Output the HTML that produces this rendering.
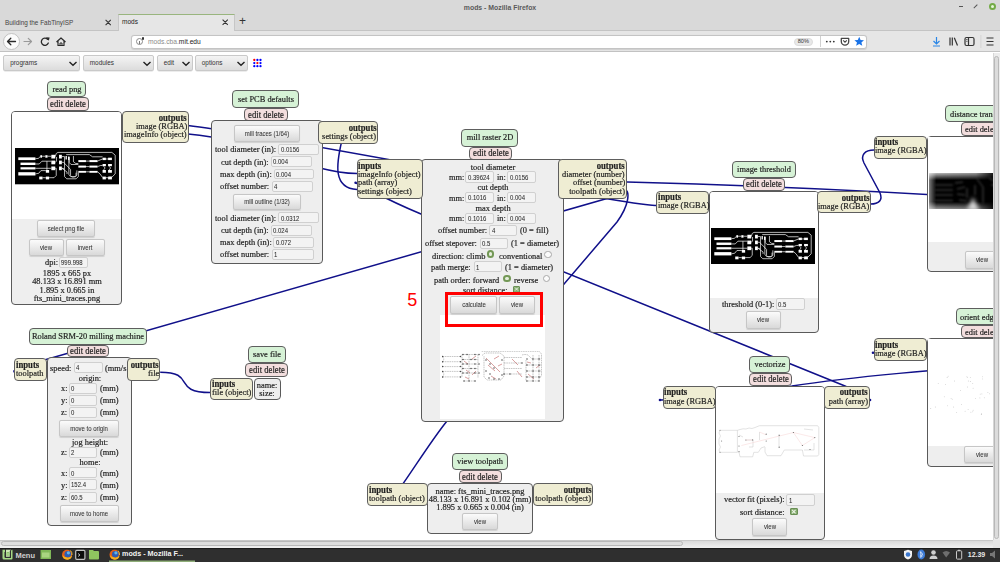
<!DOCTYPE html><html><head><meta charset="utf-8"><style>
*{margin:0;padding:0;box-sizing:border-box}
html,body{width:1000px;height:562px;overflow:hidden;background:#fff}
body{position:relative;font-family:"Liberation Serif",serif}
div{position:absolute}
.t{white-space:nowrap}
.ttl{background:#d6f2d6;border:1px solid #5e5e5e;border-radius:4px}
.ed{background:#f3dede;border:1px solid #5e5e5e;border-radius:4px}
.bd{background:#eeeeee;border:1px solid #5a5a5a;border-radius:4px}
.io{background:#efedd3;border:1px solid #5e5e5e;border-radius:4px}
.btn{background:linear-gradient(#fbfbfb,#d9d9d9);border:1px solid #c6c6c6;border-radius:2px;box-shadow:0 0.6px 0.8px rgba(0,0,0,0.12)}
.inp{background:#f3f3f3;border:1px solid #d0d0d0;border-radius:2px}
.wh{background:#fff}
svg{position:absolute;left:0;top:0}
</style></head><body>

<div class="" style="left:0.0px;top:0.0px;width:1000.0px;height:52.0px;background:#d9d9d9;"></div>
<div class="t" style="left:300.0px;width:400px;text-align:center;top:4.36px;font-size:6.90px;line-height:8.28px;font-weight:bold;color:#5a5a5a;font-family:'Liberation Sans', sans-serif;">mods - Mozilla Firefox</div>
<div style="left:959px;top:6px;width:4px;height:1.3px;background:#555"></div>
<div style="left:974.5px;top:4px;width:1.4px;height:5px;background:#555;transform:rotate(45deg)"></div>
<div style="left:988.5px;top:3px;width:7px;height:7px;border-radius:50%;background:#e8f6dd;border:2px solid #74ab47"></div>
<div class="" style="left:0.0px;top:13.0px;width:1000.0px;height:17.0px;background:#d9d9d9;"></div>
<div style="left:0;top:29.5px;width:1000px;height:1px;background:#c4c4c4"></div>
<div class="t" style="left:5.0px;top:18.76px;font-size:6.40px;line-height:7.68px;color:#444;font-family:'Liberation Sans', sans-serif;">Building the FabTinyISP</div>
<div style="left:117.5px;top:13.5px;width:117px;height:17px;background:#e6e6e6;border-left:1px solid #c6c6c6;border-right:1px solid #c6c6c6;border-top:1.5px solid #99b57e"></div>
<div class="t" style="left:122.0px;top:18.10px;font-size:6.50px;line-height:7.80px;color:#222;font-family:'Liberation Sans', sans-serif;">mods</div>
<svg width="1000" height="30" style="left:0;top:0"><path d="M105.6 19.9 L110.8 25.1 M110.8 19.9 L105.6 25.1 M222.6 19.6 L227.8 24.8 M227.8 19.6 L222.6 24.8" stroke="#333" stroke-width="1.1"/></svg>
<div class="t" style="left:239.0px;top:14.30px;font-size:12.00px;line-height:14.40px;color:#333;font-family:'Liberation Sans', sans-serif;">+</div>
<div class="" style="left:0.0px;top:30.5px;width:1000.0px;height:21.5px;background:#e6e6e6;border-bottom:1px solid #c2c2c2;"></div>
<div style="left:3px;top:33px;width:17px;height:17px;border-radius:50%;background:#fbfbfb;border:1px solid #c2c2c2"></div>
<svg width="1000" height="60" style="left:0;top:0">
<g fill="none" stroke="#2a2a2a" stroke-width="1.3" stroke-linecap="round" stroke-linejoin="round">
<path d="M7.5 41.5 H15.5 M7.5 41.5 L10.8 38.2 M7.5 41.5 L10.8 44.8"/>
</g>
<g fill="none" stroke="#9a9a9a" stroke-width="1.2" stroke-linecap="round" stroke-linejoin="round">
<path d="M24 41.5 H31.5 M31.5 41.5 L28.3 38.3 M31.5 41.5 L28.3 44.7"/>
</g>
<g fill="none" stroke="#2a2a2a" stroke-width="1.3" stroke-linecap="round">
<path d="M47.5 39.2 A3.6 3.6 0 1 0 48.3 43"/>
</g>
<path d="M46 37.2 L49.6 37.6 L48.8 40.8 Z" fill="#2a2a2a"/>
<path d="M56.5 42 L61 38 L65.5 42 M58 41 V45.5 H64 V41" fill="none" stroke="#2a2a2a" stroke-width="1.2" stroke-linejoin="round"/>
<path d="M60 45.5 V43 H62 V45.5" fill="none" stroke="#2a2a2a" stroke-width="1"/>
</svg>
<div style="left:131px;top:34.5px;width:736px;height:14.5px;background:#fff;border:1px solid #c4c4c4;border-radius:3px;box-shadow:0 0.5px 1px rgba(0,0,0,0.1)"></div>
<div style="left:135.5px;top:37.8px;width:7.6px;height:7.6px;border-radius:50%;border:0.9px solid #8a8a8a"></div>
<div style="left:138.8px;top:40.5px;width:0.9px;height:3px;background:#7a7a7a"></div>
<div style="left:141.8px;top:37.2px;width:2.4px;height:2.4px;border-radius:50%;background:#333"></div>
<div class="t" style="left:148px;top:36.5px;font-size:6.7px;line-height:10px;font-family:'Liberation Sans', sans-serif;color:#8a8a8a">mods.cba.<span style="color:#222">mit.edu</span></div>
<div style="left:793.5px;top:37.8px;width:19.5px;height:8px;border-radius:4px;background:#e9e9e9;border:0.6px solid #dcdcdc"></div>
<div class="t" style="left:603.3px;width:400px;text-align:center;top:38.44px;font-size:5.60px;line-height:6.72px;color:#333;font-family:'Liberation Sans', sans-serif;">80%</div>
<div style="left:819.5px;top:36px;width:1px;height:11px;background:#d0d0d0"></div>
<svg width="1000" height="60" style="left:0;top:0">
<g fill="#333"><circle cx="826.8" cy="41.6" r="0.9"/><circle cx="830.3" cy="41.6" r="0.9"/><circle cx="833.8" cy="41.6" r="0.9"/></g>
<path d="M841.3 38.4 H848.7 V41.5 A3.7 3.7 0 0 1 841.3 41.5 Z" fill="#fff" stroke="#454545" stroke-width="1.3" stroke-linejoin="round"/>
<path d="M843.2 40.4 L845 42.2 L846.8 40.4" fill="none" stroke="#454545" stroke-width="1.1"/>
<path d="M859.2 36.8 L860.6 40 L864 40.2 L861.4 42.4 L862.3 45.8 L859.2 43.9 L856.1 45.8 L857 42.4 L854.4 40.2 L857.8 40 Z" fill="#1a73e8"/>
<g fill="none" stroke="#2a86e6" stroke-width="1.2"><path d="M936.5 37 V44 M933.5 41 L936.5 44 L939.5 41 M933 46 H940"/></g>
<g fill="none" stroke="#333" stroke-width="1.2"><path d="M950 37.5 V45.5 M952.3 37.5 V45.5 M954.3 37.7 L957.5 45.5"/></g>
<rect x="965" y="37.5" width="9" height="8" rx="1.5" fill="none" stroke="#333" stroke-width="1.2"/>
<path d="M968.5 37.5 V45.5" stroke="#333" stroke-width="1.2"/>
<path d="M966.2 39.5 H967.5 M966.2 41.3 H967.5" stroke="#333" stroke-width="0.8"/>
<rect x="980.5" y="35" width="0.8" height="13" fill="#cfcfcf"/>
<g stroke="#333" stroke-width="1.2"><path d="M986.5 38 H993.5 M986.5 41.5 H993.5 M986.5 45 H993.5"/></g>
</svg>
<div style="left:3.4px;top:54.8px;width:77.0px;height:16px;background:linear-gradient(#f4f4f4,#dcdcdc);border:1px solid #c9c9c9;border-radius:2px;box-shadow:0 0.5px 0.5px rgba(0,0,0,0.15)"></div>
<div class="t" style="left:10.2px;top:59.16px;font-size:6.40px;line-height:7.68px;color:#333;font-family:'Liberation Sans', sans-serif;">programs</div>
<svg width="12" height="8" style="left:67.4px;top:59.5px"><path d="M2.5 2 L6 5.3 L9.5 2" fill="none" stroke="#222" stroke-width="1.4"/></svg>
<div style="left:83px;top:54.8px;width:71px;height:16px;background:linear-gradient(#f4f4f4,#dcdcdc);border:1px solid #c9c9c9;border-radius:2px;box-shadow:0 0.5px 0.5px rgba(0,0,0,0.15)"></div>
<div class="t" style="left:89.8px;top:59.16px;font-size:6.40px;line-height:7.68px;color:#333;font-family:'Liberation Sans', sans-serif;">modules</div>
<svg width="12" height="8" style="left:141px;top:59.5px"><path d="M2.5 2 L6 5.3 L9.5 2" fill="none" stroke="#222" stroke-width="1.4"/></svg>
<div style="left:157px;top:54.8px;width:35.599999999999994px;height:16px;background:linear-gradient(#f4f4f4,#dcdcdc);border:1px solid #c9c9c9;border-radius:2px;box-shadow:0 0.5px 0.5px rgba(0,0,0,0.15)"></div>
<div class="t" style="left:163.8px;top:59.16px;font-size:6.40px;line-height:7.68px;color:#333;font-family:'Liberation Sans', sans-serif;">edit</div>
<svg width="12" height="8" style="left:179.6px;top:59.5px"><path d="M2.5 2 L6 5.3 L9.5 2" fill="none" stroke="#222" stroke-width="1.4"/></svg>
<div style="left:195px;top:54.8px;width:53px;height:16px;background:linear-gradient(#f4f4f4,#dcdcdc);border:1px solid #c9c9c9;border-radius:2px;box-shadow:0 0.5px 0.5px rgba(0,0,0,0.15)"></div>
<div class="t" style="left:201.8px;top:59.16px;font-size:6.40px;line-height:7.68px;color:#333;font-family:'Liberation Sans', sans-serif;">options</div>
<svg width="12" height="8" style="left:235px;top:59.5px"><path d="M2.5 2 L6 5.3 L9.5 2" fill="none" stroke="#222" stroke-width="1.4"/></svg>
<svg width="1000" height="80" style="left:0;top:0"><circle cx="254.3" cy="60.0" r="1.15" fill="#f00"/><circle cx="257.4" cy="60.0" r="1.15" fill="#00f"/><circle cx="260.5" cy="60.0" r="1.15" fill="#00f"/><circle cx="254.3" cy="63.1" r="1.15" fill="#00f"/><circle cx="257.4" cy="63.1" r="1.15" fill="#f00"/><circle cx="260.5" cy="63.1" r="1.15" fill="#00f"/><circle cx="254.3" cy="66.2" r="1.15" fill="#00f"/><circle cx="257.4" cy="66.2" r="1.15" fill="#00f"/><circle cx="260.5" cy="66.2" r="1.15" fill="#00f"/></svg>
<svg width="1000" height="562" style="left:0;top:0"><path d="M188 125.4 C 283 137, 642 209, 657 205.3" fill="none" stroke="#10108a" stroke-width="1.5"/><path d="M188 134 C 255 139.5, 305 172, 357 173.6" fill="none" stroke="#10108a" stroke-width="1.5"/><path d="M342 140 C 336 165, 333 188, 357 189.5" fill="none" stroke="#10108a" stroke-width="1.5"/><path d="M356 183 C 372 190, 380 197, 421 214 L 845 386 C 855 390, 862 396, 870 400" fill="none" stroke="#10108a" stroke-width="1.5"/><path d="M627 182 C 700 184, 850 189, 1000 199" fill="none" stroke="#10108a" stroke-width="1.5"/><path d="M626 190 C 629 192, 630 204, 617 222 L 447 421 C 430 442, 410 475, 395 495" fill="none" stroke="#10108a" stroke-width="1.5"/><path d="M870.5 204 C 879 204, 883 200, 880 193 L 864 163 C 860 155, 865 150, 874 150" fill="none" stroke="#10108a" stroke-width="1.5"/><path d="M160.2 372.2 C 197 372.2, 171 392.5, 210.3 392.5" fill="none" stroke="#10108a" stroke-width="1.5"/><path d="M1000 366 C 950 368, 850 377, 792 386 L 715 396 C 690 399, 675 400, 660 400" fill="none" stroke="#10108a" stroke-width="1.5"/><path d="M627 192.7 L 20 367 Q 15 369 14 371" fill="none" stroke="#10108a" stroke-width="1.5"/><circle cx="355.6" cy="182.8" r="1.3" fill="#10108a"/><circle cx="14.5" cy="371.5" r="1.3" fill="#10108a"/><circle cx="660" cy="400" r="1.3" fill="#10108a"/><circle cx="870" cy="400" r="1.3" fill="#10108a"/><circle cx="873" cy="352.7" r="1.3" fill="#10108a"/></svg>
<div class="ttl" style="left:47.0px;top:81.0px;width:39.4px;height:16.0px;"></div>
<div class="t" style="left:-133.3px;width:400px;text-align:center;top:83.58px;font-size:9.20px;line-height:11.04px;color:#222;font-family:'Liberation Serif', serif;transform:scaleX(0.9132);transform-origin:center center;-webkit-text-stroke:0.2px #222;">read png</div>
<div class="ed" style="left:46.5px;top:97.0px;width:42.1px;height:14.0px;"></div>
<div class="t" style="left:-132.4px;width:400px;text-align:center;top:99.02px;font-size:9.47px;line-height:11.37px;color:#222;font-family:'Liberation Serif', serif;transform:scaleX(0.9132);transform-origin:center center;-webkit-text-stroke:0.2px #222;">edit delete</div>
<div class="bd" style="left:11.0px;top:111.0px;width:111.0px;height:194.3px;"></div>
<div class="wh" style="left:12px;top:112px;width:109px;height:107px;border-radius:3px 3px 0 0"></div>
<svg width="104.6" height="36.3" viewBox="0 0 104.5 36.3" preserveAspectRatio="none" style="left:14.6px;top:148.3px"><rect width="104.5" height="36.3" fill="#000"/><g><g fill="#fff"><rect x="3.3" y="9.35" width="17.1" height="2.75"/><rect x="5.5" y="14.6" width="14.9" height="2.4"/><rect x="5.5" y="19.25" width="14.9" height="2.2"/><rect x="3.3" y="24.2" width="17.1" height="3.3"/><rect x="25.3" y="7.2" width="1.7" height="2.5"/><rect x="30.3" y="7.2" width="2.2" height="2.5"/><rect x="36.3" y="6.8" width="3.9" height="3.7"/><rect x="44" y="6.8" width="2.8" height="3.7"/><rect x="36.3" y="12.6" width="3.9" height="3.7"/><rect x="44" y="12.6" width="2.8" height="3.7"/><rect x="36.3" y="18.5" width="3.9" height="3.7"/><rect x="44" y="18.5" width="2.8" height="3.7"/><rect x="30.8" y="22" width="3.3" height="2.75"/><rect x="24.2" y="28.6" width="3.3" height="2.8"/><rect x="30.8" y="28.6" width="3.3" height="2.8"/><rect x="63.3" y="12.1" width="7.6" height="2"/><rect x="63.3" y="17.6" width="7.6" height="2"/><rect x="63.3" y="22.9" width="7.6" height="1.85"/><rect x="74.3" y="12.1" width="8.2" height="2"/><rect x="74.3" y="17.6" width="8.2" height="2"/><rect x="74.3" y="22.9" width="8.2" height="1.85"/><rect x="87.5" y="9.7" width="3.3" height="2.4"/><rect x="93" y="9.7" width="3.8" height="2.4"/><rect x="87.5" y="16" width="3.3" height="2.2"/><rect x="93" y="16" width="3.8" height="2.2"/><rect x="87.5" y="22" width="3.3" height="2.75"/><rect x="93" y="22" width="3.8" height="2.75"/><rect x="87.5" y="28.6" width="3.3" height="2.8"/><rect x="93" y="28.6" width="3.8" height="2.8"/><rect x="50.5" y="8" width="1.3" height="3.5"/><rect x="53" y="9" width="1.3" height="3"/></g><g fill="none" stroke="#fff" stroke-width="0.7"><path d="M40.2 8.6 L41.2 5.5 L42.9 4.4 H96.8 L100.1 7.15 V25.9 L96.8 29.2 H94"/><path d="M20.4 10.7 L23.5 10.4 L25.3 8.3 M27 8.25 H30.3 M32.5 8.25 H36.3"/><path d="M20.4 16 H24.2 L26.9 13.2 H36.3"/><path d="M20.4 20.3 H36.3"/><path d="M20.4 25.9 L23.7 25.3 L25.9 22.6 H30.8"/><path d="M31.9 13.2 V22"/><path d="M40.2 14.5 L41.5 13 V9"/><path d="M27.5 29.7 H30.8 M34.1 29.7 H39 L41.2 27.5 V20.3 H40.2"/><path d="M46.8 8.6 H49.5 V28.6 L51.7 30.8 H61.1 L63.3 28.6 V24.5"/><path d="M46.8 14.3 H48.5 L55.5 21.5 V27.5 L57 29 H59.5 L61 27.5 V24.7"/><path d="M51.2 6.6 H74.3 L77.5 8.8 H87.5"/><path d="M54.2 9 V14.5 L56 16.5 H63.3"/><path d="M70.9 18.6 H74.3 M70.9 13.1 H74.3 M70.9 23.8 H74.3"/><path d="M82.5 13.1 L85 12 L87.5 11 M82.5 18.6 L85.5 17.5 H87.5 M82.5 23.8 L85 26 L87.5 29.5"/><path d="M47 20.4 L52 24 V26"/><path d="M53.8 8 V26.4 L55.5 28.7 H60.7 L61.8 26.4 V22.4"/><path d="M58.4 8 V13.8 L60.7 15.5 H63.3"/><path d="M46.8 20.3 L49 20.5"/><path d="M88.5 18.2 L90 20 L88.5 22 M94 18.2 L95.5 20 L94 22 M90.8 11 H93 M90.8 29.7 H93"/></g></g></svg>
<div class="io" style="left:121.6px;top:111.0px;width:67.0px;height:31.6px;"></div>
<div class="t" style="right:813.0px;top:112.52px;font-size:9.53px;line-height:11.43px;font-weight:bold;color:#222;font-family:'Liberation Serif', serif;transform:scaleX(0.9132);transform-origin:right center;-webkit-text-stroke:0.2px #222;">outputs</div>
<div class="t" style="right:813.0px;top:120.72px;font-size:9.20px;line-height:11.04px;color:#222;font-family:'Liberation Serif', serif;transform:scaleX(0.9132);transform-origin:right center;-webkit-text-stroke:0.2px #222;">image (RGBA)</div>
<div class="t" style="right:813.0px;top:128.92px;font-size:9.20px;line-height:11.04px;color:#222;font-family:'Liberation Serif', serif;transform:scaleX(0.9132);transform-origin:right center;-webkit-text-stroke:0.2px #222;">imageInfo (object)</div>
<div class="btn" style="left:37.0px;top:219.7px;width:58.0px;height:17.3px;"></div>
<div class="t" style="left:-134.0px;width:400px;text-align:center;top:224.59px;font-size:6.60px;line-height:7.92px;color:#333;font-family:'Liberation Sans', sans-serif;transform:scaleX(0.9091);transform-origin:center center;-webkit-text-stroke:0.05px #333;">select png file</div>
<div class="btn" style="left:28.6px;top:239.0px;width:35.4px;height:17.0px;"></div>
<div class="t" style="left:-153.7px;width:400px;text-align:center;top:243.74px;font-size:6.60px;line-height:7.92px;color:#333;font-family:'Liberation Sans', sans-serif;transform:scaleX(0.9091);transform-origin:center center;-webkit-text-stroke:0.05px #333;">view</div>
<div class="btn" style="left:66.0px;top:239.0px;width:38.7px;height:17.0px;"></div>
<div class="t" style="left:-114.7px;width:400px;text-align:center;top:243.74px;font-size:6.60px;line-height:7.92px;color:#333;font-family:'Liberation Sans', sans-serif;transform:scaleX(0.9091);transform-origin:center center;-webkit-text-stroke:0.05px #333;">invert</div>
<div class="t" style="left:45.0px;top:257.48px;font-size:9.20px;line-height:11.04px;color:#222;font-family:'Liberation Serif', serif;transform:scaleX(0.9132);transform-origin:left center;-webkit-text-stroke:0.2px #222;">dpi:</div>
<div class="inp" style="left:59.0px;top:257.0px;width:28.6px;height:11.0px;"></div>
<div class="t" style="left:61.2px;top:259.34px;font-size:6.60px;line-height:7.92px;color:#2a2a2a;font-family:'Liberation Sans', sans-serif;transform:scaleX(0.9091);transform-origin:left center;-webkit-text-stroke:0.05px #2a2a2a;">999.998</div>
<div class="t" style="left:-133.5px;width:400px;text-align:center;top:268.18px;font-size:9.20px;line-height:11.04px;color:#222;font-family:'Liberation Serif', serif;transform:scaleX(0.9132);transform-origin:center center;-webkit-text-stroke:0.2px #222;">1895 x 665 px</div>
<div class="t" style="left:-133.5px;width:400px;text-align:center;top:276.48px;font-size:9.20px;line-height:11.04px;color:#222;font-family:'Liberation Serif', serif;transform:scaleX(0.9132);transform-origin:center center;-webkit-text-stroke:0.2px #222;">48.133 x 16.891 mm</div>
<div class="t" style="left:-133.5px;width:400px;text-align:center;top:284.78px;font-size:9.20px;line-height:11.04px;color:#222;font-family:'Liberation Serif', serif;transform:scaleX(0.9132);transform-origin:center center;-webkit-text-stroke:0.2px #222;">1.895 x 0.665 in</div>
<div class="t" style="left:-133.5px;width:400px;text-align:center;top:292.98px;font-size:9.20px;line-height:11.04px;color:#222;font-family:'Liberation Serif', serif;transform:scaleX(0.9132);transform-origin:center center;-webkit-text-stroke:0.2px #222;">fts_mini_traces.png</div>
<div class="ttl" style="left:232.4px;top:90.3px;width:66.6px;height:18.2px;"></div>
<div class="t" style="left:65.7px;width:400px;text-align:center;top:93.98px;font-size:9.20px;line-height:11.04px;color:#222;font-family:'Liberation Serif', serif;transform:scaleX(0.9132);transform-origin:center center;-webkit-text-stroke:0.2px #222;">set PCB defaults</div>
<div class="ed" style="left:244.0px;top:108.0px;width:43.5px;height:13.0px;"></div>
<div class="t" style="left:65.8px;width:400px;text-align:center;top:109.52px;font-size:9.47px;line-height:11.37px;color:#222;font-family:'Liberation Serif', serif;transform:scaleX(0.9132);transform-origin:center center;-webkit-text-stroke:0.2px #222;">edit delete</div>
<div class="bd" style="left:211.2px;top:120.2px;width:111.8px;height:143.8px;"></div>
<div class="btn" style="left:233.8px;top:125.4px;width:66.0px;height:17.1px;"></div>
<div class="t" style="left:66.8px;width:400px;text-align:center;top:130.19px;font-size:6.60px;line-height:7.92px;color:#333;font-family:'Liberation Sans', sans-serif;transform:scaleX(0.9091);transform-origin:center center;-webkit-text-stroke:0.05px #333;">mill traces (1/64)</div>
<div class="t" style="left:215.0px;top:144.38px;font-size:9.20px;line-height:11.04px;color:#222;font-family:'Liberation Serif', serif;transform:scaleX(0.9132);transform-origin:left center;-webkit-text-stroke:0.2px #222;">tool diameter (in):</div>
<div class="inp" style="left:278.3px;top:144.1px;width:40.7px;height:10.6px;"></div>
<div class="t" style="left:280.5px;top:146.24px;font-size:6.60px;line-height:7.92px;color:#2a2a2a;font-family:'Liberation Sans', sans-serif;transform:scaleX(0.9091);transform-origin:left center;-webkit-text-stroke:0.05px #2a2a2a;">0.0156</div>
<div class="t" style="left:221.0px;top:156.58px;font-size:9.20px;line-height:11.04px;color:#222;font-family:'Liberation Serif', serif;transform:scaleX(0.9132);transform-origin:left center;-webkit-text-stroke:0.2px #222;">cut depth (in):</div>
<div class="inp" style="left:271.0px;top:156.3px;width:41.3px;height:10.6px;"></div>
<div class="t" style="left:273.2px;top:158.44px;font-size:6.60px;line-height:7.92px;color:#2a2a2a;font-family:'Liberation Sans', sans-serif;transform:scaleX(0.9091);transform-origin:left center;-webkit-text-stroke:0.05px #2a2a2a;">0.004</div>
<div class="t" style="left:219.7px;top:169.18px;font-size:9.20px;line-height:11.04px;color:#222;font-family:'Liberation Serif', serif;transform:scaleX(0.9132);transform-origin:left center;-webkit-text-stroke:0.2px #222;">max depth (in):</div>
<div class="inp" style="left:273.5px;top:168.9px;width:40.0px;height:10.6px;"></div>
<div class="t" style="left:275.7px;top:171.04px;font-size:6.60px;line-height:7.92px;color:#2a2a2a;font-family:'Liberation Sans', sans-serif;transform:scaleX(0.9091);transform-origin:left center;-webkit-text-stroke:0.05px #2a2a2a;">0.004</div>
<div class="t" style="left:220.2px;top:181.38px;font-size:9.20px;line-height:11.04px;color:#222;font-family:'Liberation Serif', serif;transform:scaleX(0.9132);transform-origin:left center;-webkit-text-stroke:0.2px #222;">offset number:</div>
<div class="inp" style="left:272.2px;top:181.1px;width:41.3px;height:10.6px;"></div>
<div class="t" style="left:274.4px;top:183.24px;font-size:6.60px;line-height:7.92px;color:#2a2a2a;font-family:'Liberation Sans', sans-serif;transform:scaleX(0.9091);transform-origin:left center;-webkit-text-stroke:0.05px #2a2a2a;">4</div>
<div class="btn" style="left:232.8px;top:193.6px;width:68.1px;height:16.8px;"></div>
<div class="t" style="left:66.9px;width:400px;text-align:center;top:198.24px;font-size:6.60px;line-height:7.92px;color:#333;font-family:'Liberation Sans', sans-serif;transform:scaleX(0.9091);transform-origin:center center;-webkit-text-stroke:0.05px #333;">mill outline (1/32)</div>
<div class="t" style="left:214.7px;top:212.78px;font-size:9.20px;line-height:11.04px;color:#222;font-family:'Liberation Serif', serif;transform:scaleX(0.9132);transform-origin:left center;-webkit-text-stroke:0.2px #222;">tool diameter (in):</div>
<div class="inp" style="left:278.4px;top:212.3px;width:40.9px;height:11.0px;"></div>
<div class="t" style="left:280.6px;top:214.64px;font-size:6.60px;line-height:7.92px;color:#2a2a2a;font-family:'Liberation Sans', sans-serif;transform:scaleX(0.9091);transform-origin:left center;-webkit-text-stroke:0.05px #2a2a2a;">0.0312</div>
<div class="t" style="left:221.0px;top:225.28px;font-size:9.20px;line-height:11.04px;color:#222;font-family:'Liberation Serif', serif;transform:scaleX(0.9132);transform-origin:left center;-webkit-text-stroke:0.2px #222;">cut depth (in):</div>
<div class="inp" style="left:271.2px;top:224.8px;width:41.2px;height:11.0px;"></div>
<div class="t" style="left:273.4px;top:227.14px;font-size:6.60px;line-height:7.92px;color:#2a2a2a;font-family:'Liberation Sans', sans-serif;transform:scaleX(0.9091);transform-origin:left center;-webkit-text-stroke:0.05px #2a2a2a;">0.024</div>
<div class="t" style="left:219.7px;top:237.38px;font-size:9.20px;line-height:11.04px;color:#222;font-family:'Liberation Serif', serif;transform:scaleX(0.9132);transform-origin:left center;-webkit-text-stroke:0.2px #222;">max depth (in):</div>
<div class="inp" style="left:273.3px;top:236.9px;width:40.7px;height:11.0px;"></div>
<div class="t" style="left:275.5px;top:239.24px;font-size:6.60px;line-height:7.92px;color:#2a2a2a;font-family:'Liberation Sans', sans-serif;transform:scaleX(0.9091);transform-origin:left center;-webkit-text-stroke:0.05px #2a2a2a;">0.072</div>
<div class="t" style="left:220.2px;top:249.38px;font-size:9.20px;line-height:11.04px;color:#222;font-family:'Liberation Serif', serif;transform:scaleX(0.9132);transform-origin:left center;-webkit-text-stroke:0.2px #222;">offset number:</div>
<div class="inp" style="left:272.0px;top:248.9px;width:41.7px;height:11.0px;"></div>
<div class="t" style="left:274.2px;top:251.24px;font-size:6.60px;line-height:7.92px;color:#2a2a2a;font-family:'Liberation Sans', sans-serif;transform:scaleX(0.9091);transform-origin:left center;-webkit-text-stroke:0.05px #2a2a2a;">1</div>
<div class="io" style="left:317.7px;top:121.0px;width:60.3px;height:22.8px;"></div>
<div class="t" style="right:623.6px;top:122.52px;font-size:9.53px;line-height:11.43px;font-weight:bold;color:#222;font-family:'Liberation Serif', serif;transform:scaleX(0.9132);transform-origin:right center;-webkit-text-stroke:0.2px #222;">outputs</div>
<div class="t" style="right:623.6px;top:130.72px;font-size:9.20px;line-height:11.04px;color:#222;font-family:'Liberation Serif', serif;transform:scaleX(0.9132);transform-origin:right center;-webkit-text-stroke:0.2px #222;">settings (object)</div>
<div class="ttl" style="left:461.2px;top:129.0px;width:57.0px;height:17.5px;"></div>
<div class="t" style="left:289.7px;width:400px;text-align:center;top:132.33px;font-size:9.20px;line-height:11.04px;color:#222;font-family:'Liberation Serif', serif;transform:scaleX(0.9132);transform-origin:center center;-webkit-text-stroke:0.2px #222;">mill raster 2D</div>
<div class="ed" style="left:469.2px;top:146.5px;width:43.0px;height:13.3px;"></div>
<div class="t" style="left:290.7px;width:400px;text-align:center;top:148.17px;font-size:9.47px;line-height:11.37px;color:#222;font-family:'Liberation Serif', serif;transform:scaleX(0.9132);transform-origin:center center;-webkit-text-stroke:0.2px #222;">edit delete</div>
<div class="bd" style="left:421.0px;top:159.4px;width:143.0px;height:262.8px;"></div>
<div class="io" style="left:356.6px;top:159.4px;width:66.2px;height:39.6px;"></div>
<div class="t" style="left:358.4px;top:160.92px;font-size:9.53px;line-height:11.43px;font-weight:bold;color:#222;font-family:'Liberation Serif', serif;transform:scaleX(0.9132);transform-origin:left center;-webkit-text-stroke:0.2px #222;">inputs</div>
<div class="t" style="left:358.4px;top:169.12px;font-size:9.20px;line-height:11.04px;color:#222;font-family:'Liberation Serif', serif;transform:scaleX(0.9132);transform-origin:left center;-webkit-text-stroke:0.2px #222;">imageInfo (object)</div>
<div class="t" style="left:358.4px;top:177.32px;font-size:9.20px;line-height:11.04px;color:#222;font-family:'Liberation Serif', serif;transform:scaleX(0.9132);transform-origin:left center;-webkit-text-stroke:0.2px #222;">path (array)</div>
<div class="t" style="left:358.4px;top:185.52px;font-size:9.20px;line-height:11.04px;color:#222;font-family:'Liberation Serif', serif;transform:scaleX(0.9132);transform-origin:left center;-webkit-text-stroke:0.2px #222;">settings (object)</div>
<div class="io" style="left:558.0px;top:159.4px;width:68.7px;height:39.4px;"></div>
<div class="t" style="right:374.9px;top:160.92px;font-size:9.53px;line-height:11.43px;font-weight:bold;color:#222;font-family:'Liberation Serif', serif;transform:scaleX(0.9132);transform-origin:right center;-webkit-text-stroke:0.2px #222;">outputs</div>
<div class="t" style="right:374.9px;top:169.12px;font-size:9.20px;line-height:11.04px;color:#222;font-family:'Liberation Serif', serif;transform:scaleX(0.9132);transform-origin:right center;-webkit-text-stroke:0.2px #222;">diameter (number)</div>
<div class="t" style="right:374.9px;top:177.32px;font-size:9.20px;line-height:11.04px;color:#222;font-family:'Liberation Serif', serif;transform:scaleX(0.9132);transform-origin:right center;-webkit-text-stroke:0.2px #222;">offset (number)</div>
<div class="t" style="right:374.9px;top:185.52px;font-size:9.20px;line-height:11.04px;color:#222;font-family:'Liberation Serif', serif;transform:scaleX(0.9132);transform-origin:right center;-webkit-text-stroke:0.2px #222;">toolpath (object)</div>
<div class="t" style="left:292.7px;width:400px;text-align:center;top:161.78px;font-size:9.20px;line-height:11.04px;color:#222;font-family:'Liberation Serif', serif;transform:scaleX(0.9132);transform-origin:center center;-webkit-text-stroke:0.2px #222;">tool diameter</div>
<div class="t" style="left:449.0px;top:171.98px;font-size:9.20px;line-height:11.04px;color:#222;font-family:'Liberation Serif', serif;transform:scaleX(0.9132);transform-origin:left center;-webkit-text-stroke:0.2px #222;">mm:</div>
<div class="inp" style="left:465.4px;top:171.2px;width:29.0px;height:11.6px;"></div>
<div class="t" style="left:467.6px;top:173.84px;font-size:6.60px;line-height:7.92px;color:#2a2a2a;font-family:'Liberation Sans', sans-serif;transform:scaleX(0.9091);transform-origin:left center;-webkit-text-stroke:0.05px #2a2a2a;">0.39624</div>
<div class="t" style="left:497.0px;top:171.98px;font-size:9.20px;line-height:11.04px;color:#222;font-family:'Liberation Serif', serif;transform:scaleX(0.9132);transform-origin:left center;-webkit-text-stroke:0.2px #222;">in:</div>
<div class="inp" style="left:507.4px;top:171.2px;width:28.3px;height:11.6px;"></div>
<div class="t" style="left:509.6px;top:173.84px;font-size:6.60px;line-height:7.92px;color:#2a2a2a;font-family:'Liberation Sans', sans-serif;transform:scaleX(0.9091);transform-origin:left center;-webkit-text-stroke:0.05px #2a2a2a;">0.0156</div>
<div class="t" style="left:449.0px;top:192.58px;font-size:9.20px;line-height:11.04px;color:#222;font-family:'Liberation Serif', serif;transform:scaleX(0.9132);transform-origin:left center;-webkit-text-stroke:0.2px #222;">mm:</div>
<div class="inp" style="left:465.4px;top:191.8px;width:29.0px;height:11.6px;"></div>
<div class="t" style="left:467.6px;top:194.44px;font-size:6.60px;line-height:7.92px;color:#2a2a2a;font-family:'Liberation Sans', sans-serif;transform:scaleX(0.9091);transform-origin:left center;-webkit-text-stroke:0.05px #2a2a2a;">0.1016</div>
<div class="t" style="left:497.0px;top:192.58px;font-size:9.20px;line-height:11.04px;color:#222;font-family:'Liberation Serif', serif;transform:scaleX(0.9132);transform-origin:left center;-webkit-text-stroke:0.2px #222;">in:</div>
<div class="inp" style="left:507.4px;top:191.8px;width:28.3px;height:11.6px;"></div>
<div class="t" style="left:509.6px;top:194.44px;font-size:6.60px;line-height:7.92px;color:#2a2a2a;font-family:'Liberation Sans', sans-serif;transform:scaleX(0.9091);transform-origin:left center;-webkit-text-stroke:0.05px #2a2a2a;">0.004</div>
<div class="t" style="left:449.0px;top:213.28px;font-size:9.20px;line-height:11.04px;color:#222;font-family:'Liberation Serif', serif;transform:scaleX(0.9132);transform-origin:left center;-webkit-text-stroke:0.2px #222;">mm:</div>
<div class="inp" style="left:465.4px;top:212.5px;width:29.0px;height:11.6px;"></div>
<div class="t" style="left:467.6px;top:215.14px;font-size:6.60px;line-height:7.92px;color:#2a2a2a;font-family:'Liberation Sans', sans-serif;transform:scaleX(0.9091);transform-origin:left center;-webkit-text-stroke:0.05px #2a2a2a;">0.1016</div>
<div class="t" style="left:497.0px;top:213.28px;font-size:9.20px;line-height:11.04px;color:#222;font-family:'Liberation Serif', serif;transform:scaleX(0.9132);transform-origin:left center;-webkit-text-stroke:0.2px #222;">in:</div>
<div class="inp" style="left:507.4px;top:212.5px;width:28.3px;height:11.6px;"></div>
<div class="t" style="left:509.6px;top:215.14px;font-size:6.60px;line-height:7.92px;color:#2a2a2a;font-family:'Liberation Sans', sans-serif;transform:scaleX(0.9091);transform-origin:left center;-webkit-text-stroke:0.05px #2a2a2a;">0.004</div>
<div class="t" style="left:292.7px;width:400px;text-align:center;top:182.48px;font-size:9.20px;line-height:11.04px;color:#222;font-family:'Liberation Serif', serif;transform:scaleX(0.9132);transform-origin:center center;-webkit-text-stroke:0.2px #222;">cut depth</div>
<div class="t" style="left:292.7px;width:400px;text-align:center;top:202.98px;font-size:9.20px;line-height:11.04px;color:#222;font-family:'Liberation Serif', serif;transform:scaleX(0.9132);transform-origin:center center;-webkit-text-stroke:0.2px #222;">max depth</div>
<div class="t" style="left:437.8px;top:225.18px;font-size:9.20px;line-height:11.04px;color:#222;font-family:'Liberation Serif', serif;transform:scaleX(0.9132);transform-origin:left center;-webkit-text-stroke:0.2px #222;">offset number:</div>
<div class="inp" style="left:489.3px;top:224.9px;width:27.7px;height:11.0px;"></div>
<div class="t" style="left:491.5px;top:227.24px;font-size:6.60px;line-height:7.92px;color:#2a2a2a;font-family:'Liberation Sans', sans-serif;transform:scaleX(0.9091);transform-origin:left center;-webkit-text-stroke:0.05px #2a2a2a;">4</div>
<div class="t" style="left:519.8px;top:225.18px;font-size:9.20px;line-height:11.04px;color:#222;font-family:'Liberation Serif', serif;transform:scaleX(0.9132);transform-origin:left center;-webkit-text-stroke:0.2px #222;">(0 = fill)</div>
<div class="t" style="left:424.7px;top:238.28px;font-size:9.20px;line-height:11.04px;color:#222;font-family:'Liberation Serif', serif;transform:scaleX(0.9132);transform-origin:left center;-webkit-text-stroke:0.2px #222;">offset stepover:</div>
<div class="inp" style="left:479.8px;top:237.7px;width:28.0px;height:11.2px;"></div>
<div class="t" style="left:482.0px;top:240.14px;font-size:6.60px;line-height:7.92px;color:#2a2a2a;font-family:'Liberation Sans', sans-serif;transform:scaleX(0.9091);transform-origin:left center;-webkit-text-stroke:0.05px #2a2a2a;">0.5</div>
<div class="t" style="left:510.6px;top:238.28px;font-size:9.20px;line-height:11.04px;color:#222;font-family:'Liberation Serif', serif;transform:scaleX(0.9132);transform-origin:left center;-webkit-text-stroke:0.2px #222;">(1 = diameter)</div>
<div class="t" style="left:431.6px;top:250.78px;font-size:9.20px;line-height:11.04px;color:#222;font-family:'Liberation Serif', serif;transform:scaleX(0.9132);transform-origin:left center;-webkit-text-stroke:0.2px #222;">direction: climb</div>
<div class="t" style="left:498.5px;top:250.78px;font-size:9.20px;line-height:11.04px;color:#222;font-family:'Liberation Serif', serif;transform:scaleX(0.9132);transform-origin:left center;-webkit-text-stroke:0.2px #222;">conventional</div>
<div class="t" style="left:430.8px;top:261.58px;font-size:9.20px;line-height:11.04px;color:#222;font-family:'Liberation Serif', serif;transform:scaleX(0.9132);transform-origin:left center;-webkit-text-stroke:0.2px #222;">path merge:</div>
<div class="inp" style="left:474.2px;top:261.4px;width:28.0px;height:10.6px;"></div>
<div class="t" style="left:476.4px;top:263.54px;font-size:6.60px;line-height:7.92px;color:#2a2a2a;font-family:'Liberation Sans', sans-serif;transform:scaleX(0.9091);transform-origin:left center;-webkit-text-stroke:0.05px #2a2a2a;">1</div>
<div class="t" style="left:505.0px;top:261.58px;font-size:9.20px;line-height:11.04px;color:#222;font-family:'Liberation Serif', serif;transform:scaleX(0.9132);transform-origin:left center;-webkit-text-stroke:0.2px #222;">(1 = diameter)</div>
<div class="t" style="left:433.5px;top:275.18px;font-size:9.20px;line-height:11.04px;color:#222;font-family:'Liberation Serif', serif;transform:scaleX(0.9132);transform-origin:left center;-webkit-text-stroke:0.2px #222;">path order: forward</div>
<div class="t" style="left:513.8px;top:275.18px;font-size:9.20px;line-height:11.04px;color:#222;font-family:'Liberation Serif', serif;transform:scaleX(0.9132);transform-origin:left center;-webkit-text-stroke:0.2px #222;">reverse</div>
<div class="t" style="left:462.6px;top:285.48px;font-size:9.20px;line-height:11.04px;color:#222;font-family:'Liberation Serif', serif;transform:scaleX(0.9132);transform-origin:left center;-webkit-text-stroke:0.2px #222;">sort distance:</div>
<div style="left:486.8px;top:250.4px;width:7.6px;height:7.6px;border-radius:50%;background:#e6eedd;border:2.1px solid #739856"></div>
<div style="left:544.4px;top:250.6px;width:7.2px;height:7.2px;border-radius:50%;background:#fbfbfb;border:0.8px solid #a8a8a8"></div>
<div style="left:503.1px;top:274.5px;width:7.6px;height:7.6px;border-radius:50%;background:#e6eedd;border:2.1px solid #739856"></div>
<div style="left:543.1px;top:274.7px;width:7.2px;height:7.2px;border-radius:50%;background:#fbfbfb;border:0.8px solid #a8a8a8"></div>
<div style="left:513.4px;top:286.4px;width:7.1px;height:6.2px;background:#86ad70;border:0.8px solid #6a8f56;border-radius:1px"></div>
<svg width="7.1" height="6.2" style="left:513.4px;top:286.4px" viewBox="0 0 10 10"><path d="M2.6 2.6 L7.4 7.4 M7.4 2.6 L2.6 7.4" stroke="#eef4e8" stroke-width="1.5"/></svg>
<div class="wh" style="left:440.3px;top:314.7px;width:104.7px;height:104px"></div>
<div class="btn" style="left:450.3px;top:296.0px;width:46.3px;height:17.7px;"></div>
<div class="t" style="left:273.5px;width:400px;text-align:center;top:301.09px;font-size:6.60px;line-height:7.92px;color:#333;font-family:'Liberation Sans', sans-serif;transform:scaleX(0.9091);transform-origin:center center;-webkit-text-stroke:0.05px #333;">calculate</div>
<div class="btn" style="left:499.4px;top:296.0px;width:35.5px;height:17.7px;"></div>
<div class="t" style="left:317.1px;width:400px;text-align:center;top:301.09px;font-size:6.60px;line-height:7.92px;color:#333;font-family:'Liberation Sans', sans-serif;transform:scaleX(0.9091);transform-origin:center center;-webkit-text-stroke:0.05px #333;">view</div>
<svg width="100.4" height="31" viewBox="0 0 100.4 31" style="left:442.4px;top:350.6px"><g fill="none" stroke="#8c8c8c" stroke-width="0.5" stroke-dasharray="1.6 0.7"><path d="M39.7 0.3 H97.2 L99.5 3 V25 L97 27"/><path d="M0.6 5.5 H18.5 M0.6 10.7 H18.5 M0.6 15.6 H18.5 M0.6 20.4 H18.5 M0.6 25.9 H18.5"/><path d="M0.6 5.5 L2 8 L0.6 10.7 M0.6 20.4 L2 23 L0.6 25.9"/><path d="M20 3.5 H36 M20 8.5 H36 M20 13 H36 M20 17.5 H36 M20 22 H36 M22 30 H34 M20 3.5 V26 M36 3.5 V27 M27 3 V30"/><path d="M40 4.5 L43 2 H58 L62 5 V25 L59 29 H45 L42 26 V5"/><path d="M62 6.5 H80 M62 12 H80 M62 17.5 H80 M62 23 H80"/><path d="M80 4 Q83 3 86 4 L90 8 H99 M84 14 H99 M84 20 H99 M84 26 H99 M91 4 V30 M97 4 V30 M84 9 V30 L90 30 H97"/></g><g fill="none" stroke="#b85050" stroke-width="0.55"><path d="M22 10 L26 13 M30 8 L34 5 M24 19 L28 22 M30 24 L34 20 M23 26 L27 28"/><path d="M44 7 L58 21 M46 14 L53 20 M52 8 L57 5 M49 25 L54 28 M56 15 L60 13"/><path d="M70 8 L76 14 M75 20 L80 26 M85 11 L89 12 M86 23 L92 28 M94 17 L98 14"/></g><g fill="#4a4a4a"><circle cx="0.6" cy="5.5" r="0.75"/><circle cx="18.5" cy="5.5" r="0.75"/><circle cx="0.6" cy="10.7" r="0.75"/><circle cx="18.5" cy="10.7" r="0.75"/><circle cx="0.6" cy="15.6" r="0.75"/><circle cx="18.5" cy="15.6" r="0.75"/><circle cx="0.6" cy="20.4" r="0.75"/><circle cx="18.5" cy="20.4" r="0.75"/><circle cx="0.6" cy="25.9" r="0.75"/><circle cx="18.5" cy="25.9" r="0.75"/><circle cx="21" cy="3.5" r="0.75"/><circle cx="21" cy="8.5" r="0.75"/><circle cx="21" cy="13" r="0.75"/><circle cx="21" cy="17.5" r="0.75"/><circle cx="21" cy="22" r="0.75"/><circle cx="25" cy="3.5" r="0.75"/><circle cx="25" cy="13" r="0.75"/><circle cx="25" cy="22" r="0.75"/><circle cx="29" cy="8.5" r="0.75"/><circle cx="29" cy="17.5" r="0.75"/><circle cx="33" cy="3.5" r="0.75"/><circle cx="33" cy="8.5" r="0.75"/><circle cx="33" cy="13" r="0.75"/><circle cx="33" cy="17.5" r="0.75"/><circle cx="33" cy="22" r="0.75"/><circle cx="37" cy="3.5" r="0.75"/><circle cx="37" cy="13" r="0.75"/><circle cx="37" cy="22" r="0.75"/><circle cx="22" cy="30" r="0.75"/><circle cx="27" cy="30" r="0.75"/><circle cx="33" cy="30" r="0.75"/><circle cx="44" cy="9" r="0.75"/><circle cx="48" cy="13" r="0.75"/><circle cx="52" cy="17" r="0.75"/><circle cx="47" cy="27" r="0.75"/><circle cx="52" cy="28" r="0.75"/><circle cx="57" cy="28" r="0.75"/><circle cx="60" cy="24" r="0.75"/><circle cx="60" cy="9" r="0.75"/><circle cx="44" cy="20" r="0.75"/><circle cx="48" cy="23" r="0.75"/><circle cx="85" cy="8" r="0.75"/><circle cx="85" cy="14" r="0.75"/><circle cx="85" cy="20" r="0.75"/><circle cx="85" cy="26" r="0.75"/><circle cx="85" cy="30" r="0.75"/><circle cx="91" cy="8" r="0.75"/><circle cx="91" cy="14" r="0.75"/><circle cx="91" cy="20" r="0.75"/><circle cx="91" cy="26" r="0.75"/><circle cx="91" cy="30" r="0.75"/><circle cx="97" cy="8" r="0.75"/><circle cx="97" cy="14" r="0.75"/><circle cx="97" cy="20" r="0.75"/><circle cx="97" cy="26" r="0.75"/><circle cx="97" cy="30" r="0.75"/><circle cx="62" cy="23" r="0.75"/><circle cx="80" cy="12" r="0.75"/><circle cx="68" cy="23" r="0.75"/></g></svg>
<div style="left:445.2px;top:291.6px;width:98px;height:35.5px;border:3px solid #f00"></div>
<div class="t" style="left:212.2px;width:400px;text-align:center;top:289.50px;font-size:18.00px;line-height:20.00px;color:#f00;font-family:'Liberation Sans', sans-serif;">5</div>
<div class="ttl" style="left:731.6px;top:160.6px;width:64.2px;height:17.4px;"></div>
<div class="t" style="left:563.7px;width:400px;text-align:center;top:163.88px;font-size:9.20px;line-height:11.04px;color:#222;font-family:'Liberation Serif', serif;transform:scaleX(0.9132);transform-origin:center center;-webkit-text-stroke:0.2px #222;">image threshold</div>
<div class="ed" style="left:742.8px;top:178.0px;width:42.2px;height:12.5px;"></div>
<div class="t" style="left:563.9px;width:400px;text-align:center;top:179.27px;font-size:9.47px;line-height:11.37px;color:#222;font-family:'Liberation Serif', serif;transform:scaleX(0.9132);transform-origin:center center;-webkit-text-stroke:0.2px #222;">edit delete</div>
<div class="bd" style="left:708.5px;top:190.5px;width:110.1px;height:142.3px;"></div>
<div class="wh" style="left:709.5px;top:191.5px;width:108.1px;height:106.2px;border-radius:3px 3px 0 0"></div>
<svg width="104.6" height="36.2" viewBox="0 0 104.5 36.3" preserveAspectRatio="none" style="left:710.9px;top:228.0px"><rect width="104.5" height="36.3" fill="#000"/><g><g fill="#fff"><rect x="3.3" y="9.35" width="17.1" height="2.75"/><rect x="5.5" y="14.6" width="14.9" height="2.4"/><rect x="5.5" y="19.25" width="14.9" height="2.2"/><rect x="3.3" y="24.2" width="17.1" height="3.3"/><rect x="25.3" y="7.2" width="1.7" height="2.5"/><rect x="30.3" y="7.2" width="2.2" height="2.5"/><rect x="36.3" y="6.8" width="3.9" height="3.7"/><rect x="44" y="6.8" width="2.8" height="3.7"/><rect x="36.3" y="12.6" width="3.9" height="3.7"/><rect x="44" y="12.6" width="2.8" height="3.7"/><rect x="36.3" y="18.5" width="3.9" height="3.7"/><rect x="44" y="18.5" width="2.8" height="3.7"/><rect x="30.8" y="22" width="3.3" height="2.75"/><rect x="24.2" y="28.6" width="3.3" height="2.8"/><rect x="30.8" y="28.6" width="3.3" height="2.8"/><rect x="63.3" y="12.1" width="7.6" height="2"/><rect x="63.3" y="17.6" width="7.6" height="2"/><rect x="63.3" y="22.9" width="7.6" height="1.85"/><rect x="74.3" y="12.1" width="8.2" height="2"/><rect x="74.3" y="17.6" width="8.2" height="2"/><rect x="74.3" y="22.9" width="8.2" height="1.85"/><rect x="87.5" y="9.7" width="3.3" height="2.4"/><rect x="93" y="9.7" width="3.8" height="2.4"/><rect x="87.5" y="16" width="3.3" height="2.2"/><rect x="93" y="16" width="3.8" height="2.2"/><rect x="87.5" y="22" width="3.3" height="2.75"/><rect x="93" y="22" width="3.8" height="2.75"/><rect x="87.5" y="28.6" width="3.3" height="2.8"/><rect x="93" y="28.6" width="3.8" height="2.8"/><rect x="50.5" y="8" width="1.3" height="3.5"/><rect x="53" y="9" width="1.3" height="3"/></g><g fill="none" stroke="#fff" stroke-width="0.7"><path d="M40.2 8.6 L41.2 5.5 L42.9 4.4 H96.8 L100.1 7.15 V25.9 L96.8 29.2 H94"/><path d="M20.4 10.7 L23.5 10.4 L25.3 8.3 M27 8.25 H30.3 M32.5 8.25 H36.3"/><path d="M20.4 16 H24.2 L26.9 13.2 H36.3"/><path d="M20.4 20.3 H36.3"/><path d="M20.4 25.9 L23.7 25.3 L25.9 22.6 H30.8"/><path d="M31.9 13.2 V22"/><path d="M40.2 14.5 L41.5 13 V9"/><path d="M27.5 29.7 H30.8 M34.1 29.7 H39 L41.2 27.5 V20.3 H40.2"/><path d="M46.8 8.6 H49.5 V28.6 L51.7 30.8 H61.1 L63.3 28.6 V24.5"/><path d="M46.8 14.3 H48.5 L55.5 21.5 V27.5 L57 29 H59.5 L61 27.5 V24.7"/><path d="M51.2 6.6 H74.3 L77.5 8.8 H87.5"/><path d="M54.2 9 V14.5 L56 16.5 H63.3"/><path d="M70.9 18.6 H74.3 M70.9 13.1 H74.3 M70.9 23.8 H74.3"/><path d="M82.5 13.1 L85 12 L87.5 11 M82.5 18.6 L85.5 17.5 H87.5 M82.5 23.8 L85 26 L87.5 29.5"/><path d="M47 20.4 L52 24 V26"/><path d="M53.8 8 V26.4 L55.5 28.7 H60.7 L61.8 26.4 V22.4"/><path d="M58.4 8 V13.8 L60.7 15.5 H63.3"/><path d="M46.8 20.3 L49 20.5"/><path d="M88.5 18.2 L90 20 L88.5 22 M94 18.2 L95.5 20 L94 22 M90.8 11 H93 M90.8 29.7 H93"/></g></g></svg>
<div class="io" style="left:656.0px;top:190.5px;width:53.2px;height:23.1px;"></div>
<div class="t" style="left:657.8px;top:192.02px;font-size:9.53px;line-height:11.43px;font-weight:bold;color:#222;font-family:'Liberation Serif', serif;transform:scaleX(0.9132);transform-origin:left center;-webkit-text-stroke:0.2px #222;">inputs</div>
<div class="t" style="left:657.8px;top:200.22px;font-size:9.20px;line-height:11.04px;color:#222;font-family:'Liberation Serif', serif;transform:scaleX(0.9132);transform-origin:left center;-webkit-text-stroke:0.2px #222;">image (RGBA)</div>
<div class="io" style="left:817.4px;top:191.4px;width:53.5px;height:21.9px;"></div>
<div class="t" style="right:130.7px;top:192.92px;font-size:9.53px;line-height:11.43px;font-weight:bold;color:#222;font-family:'Liberation Serif', serif;transform:scaleX(0.9132);transform-origin:right center;-webkit-text-stroke:0.2px #222;">outputs</div>
<div class="t" style="right:130.7px;top:201.12px;font-size:9.20px;line-height:11.04px;color:#222;font-family:'Liberation Serif', serif;transform:scaleX(0.9132);transform-origin:right center;-webkit-text-stroke:0.2px #222;">image (RGBA)</div>
<div class="t" style="left:721.7px;top:298.68px;font-size:9.20px;line-height:11.04px;color:#222;font-family:'Liberation Serif', serif;transform:scaleX(0.9132);transform-origin:left center;-webkit-text-stroke:0.2px #222;">threshold (0-1):</div>
<div class="inp" style="left:775.7px;top:298.0px;width:29.0px;height:11.7px;"></div>
<div class="t" style="left:777.9px;top:300.69px;font-size:6.60px;line-height:7.92px;color:#2a2a2a;font-family:'Liberation Sans', sans-serif;transform:scaleX(0.9091);transform-origin:left center;-webkit-text-stroke:0.05px #2a2a2a;">0.5</div>
<div class="btn" style="left:746.0px;top:311.3px;width:34.6px;height:17.4px;"></div>
<div class="t" style="left:563.3px;width:400px;text-align:center;top:316.24px;font-size:6.60px;line-height:7.92px;color:#333;font-family:'Liberation Sans', sans-serif;transform:scaleX(0.9091);transform-origin:center center;-webkit-text-stroke:0.05px #333;">view</div>
<div style="left:0;top:0;width:992.6px;height:540px;overflow:hidden">
<div class="ttl" style="left:945.2px;top:105.0px;width:84.8px;height:17.0px;"></div>
<div class="t" style="left:949.6px;top:108.78px;font-size:9.20px;line-height:11.04px;color:#222;font-family:'Liberation Serif', serif;transform:scaleX(0.9132);transform-origin:left center;-webkit-text-stroke:0.2px #222;">distance transform</div>
<div class="ed" style="left:961.0px;top:122.0px;width:69.0px;height:13.6px;"></div>
<div class="t" style="left:964.5px;top:124.08px;font-size:9.20px;line-height:11.04px;color:#222;font-family:'Liberation Serif', serif;transform:scaleX(0.9132);transform-origin:left center;-webkit-text-stroke:0.2px #222;">edit delete</div>
<div class="bd" style="left:926.6px;top:135.6px;width:83.4px;height:136.9px;"></div>
<div class="wh" style="left:927.6px;top:136.6px;width:80px;height:105.5px;"></div>
<svg width="104" height="36" viewBox="0 0 104 36" style="left:929.3px;top:172.7px">
<defs>
<linearGradient id="dt2" x1="0" y1="1" x2="0" y2="0"><stop offset="0" stop-color="#fff" stop-opacity="0.6"/><stop offset="0.2" stop-color="#fff" stop-opacity="0"/></linearGradient>
<linearGradient id="dt3" x1="0" y1="0" x2="1" y2="0"><stop offset="0" stop-color="#fff" stop-opacity="0.5"/><stop offset="0.07" stop-color="#fff" stop-opacity="0"/></linearGradient>
<linearGradient id="dt4" x1="0" y1="0" x2="1" y2="0"><stop offset="0" stop-color="#fff" stop-opacity="1"/><stop offset="0.45" stop-color="#fff" stop-opacity="0.8"/><stop offset="0.65" stop-color="#fff" stop-opacity="0"/></linearGradient>
<linearGradient id="dt1" x1="0" y1="0" x2="0" y2="1"><stop offset="0" stop-color="#fff" stop-opacity="0.75"/><stop offset="0.2" stop-color="#fff" stop-opacity="0"/></linearGradient>
<mask id="dtm"><rect width="104" height="36" fill="url(#dt4)"/></mask>
<filter id="dtb" x="-20%" y="-20%" width="140%" height="140%"><feGaussianBlur stdDeviation="1.1"/></filter>
<filter id="dtb2" x="-50%" y="-50%" width="200%" height="200%"><feGaussianBlur stdDeviation="2.2"/></filter>
</defs>
<rect width="104" height="36" fill="#000"/>
<rect width="104" height="36" fill="url(#dt1)" mask="url(#dtm)"/>
<rect width="104" height="36" fill="url(#dt2)" mask="url(#dtm)"/>
<rect width="104" height="36" fill="url(#dt3)"/>
<path d="M38 37 L44 24 L50 37 Z" fill="#fff" fill-opacity="0.8" filter="url(#dtb2)"/>
<g filter="url(#dtb)" fill="none" stroke="#6a6a6a" stroke-width="0.7">
<path d="M6 12 H24 M6 17 H24 M6 22 H24 M6 27.5 H24"/>
<path d="M26 10 L34 9 M28 16 L36 14 M28 21 L36 22 M30 27 L38 28 M38 15 V25 M46 12 V22"/>
<path d="M48 6 L54 14 V30 M60 5 L66 9 V20 L72 26 M62 12 H74 L80 18 V32 M84 10 V32 M92 8 V32 M75 24 H86 M88 12 H98 M88 20 H98"/>
</g>
</svg>
<div class="btn" style="left:964.5px;top:251.2px;width:35.5px;height:17.8px;"></div>
<div class="t" style="left:782.2px;width:400px;text-align:center;top:256.34px;font-size:6.60px;line-height:7.92px;color:#333;font-family:'Liberation Sans', sans-serif;transform:scaleX(0.9091);transform-origin:center center;-webkit-text-stroke:0.05px #333;">view</div>
<div class="ttl" style="left:955.5px;top:307.8px;width:74.5px;height:17.6px;"></div>
<div class="t" style="left:960.0px;top:311.78px;font-size:9.20px;line-height:11.04px;color:#222;font-family:'Liberation Serif', serif;transform:scaleX(0.9132);transform-origin:left center;-webkit-text-stroke:0.2px #222;">orient edges</div>
<div class="ed" style="left:961.0px;top:325.4px;width:69.0px;height:12.9px;"></div>
<div class="t" style="left:964.5px;top:327.08px;font-size:9.20px;line-height:11.04px;color:#222;font-family:'Liberation Serif', serif;transform:scaleX(0.9132);transform-origin:left center;-webkit-text-stroke:0.2px #222;">edit delete</div>
<div class="bd" style="left:926.6px;top:338.3px;width:83.4px;height:129.1px;"></div>
<div class="wh" style="left:927.6px;top:339.3px;width:80px;height:106.3px;"></div>
<div class="btn" style="left:964.0px;top:446.2px;width:36.0px;height:17.0px;"></div>
<div class="t" style="left:782.0px;width:400px;text-align:center;top:450.94px;font-size:6.60px;line-height:7.92px;color:#333;font-family:'Liberation Sans', sans-serif;transform:scaleX(0.9091);transform-origin:center center;-webkit-text-stroke:0.05px #333;">view</div>
</div>
<div class="io" style="left:873.5px;top:135.6px;width:53.8px;height:23.0px;"></div>
<div class="t" style="left:875.3px;top:137.12px;font-size:9.53px;line-height:11.43px;font-weight:bold;color:#222;font-family:'Liberation Serif', serif;transform:scaleX(0.9132);transform-origin:left center;-webkit-text-stroke:0.2px #222;">inputs</div>
<div class="t" style="left:875.3px;top:145.32px;font-size:9.20px;line-height:11.04px;color:#222;font-family:'Liberation Serif', serif;transform:scaleX(0.9132);transform-origin:left center;-webkit-text-stroke:0.2px #222;">image (RGBA)</div>
<div class="io" style="left:873.5px;top:338.3px;width:53.8px;height:22.4px;"></div>
<div class="t" style="left:875.3px;top:339.82px;font-size:9.53px;line-height:11.43px;font-weight:bold;color:#222;font-family:'Liberation Serif', serif;transform:scaleX(0.9132);transform-origin:left center;-webkit-text-stroke:0.2px #222;">inputs</div>
<div class="t" style="left:875.3px;top:348.02px;font-size:9.20px;line-height:11.04px;color:#222;font-family:'Liberation Serif', serif;transform:scaleX(0.9132);transform-origin:left center;-webkit-text-stroke:0.2px #222;">image (RGBA)</div>
<svg width="1000" height="562" style="left:0;top:0"><circle cx="944.3" cy="396.8" r="0.4" fill="#aaa"/><circle cx="952.2" cy="399.2" r="0.4" fill="#aaa"/><circle cx="967.5" cy="377.6" r="0.4" fill="#aaa"/><circle cx="930.8" cy="408.5" r="0.4" fill="#aaa"/><circle cx="945.6" cy="384.4" r="0.4" fill="#aaa"/><circle cx="989.7" cy="393.8" r="0.4" fill="#aaa"/><circle cx="980.2" cy="394.1" r="0.4" fill="#aaa"/><circle cx="968.3" cy="381.0" r="0.4" fill="#aaa"/><circle cx="968.1" cy="409.7" r="0.4" fill="#aaa"/><circle cx="961.4" cy="404.7" r="0.4" fill="#aaa"/><circle cx="970.3" cy="377.6" r="0.4" fill="#aaa"/><circle cx="975.5" cy="398.6" r="0.4" fill="#aaa"/><circle cx="948.1" cy="376.2" r="0.4" fill="#aaa"/><circle cx="981.9" cy="393.9" r="0.4" fill="#aaa"/><circle cx="973.1" cy="410.2" r="0.4" fill="#aaa"/><circle cx="972.8" cy="411.8" r="0.4" fill="#aaa"/><circle cx="953.7" cy="407.0" r="0.4" fill="#aaa"/><circle cx="956.7" cy="412.4" r="0.4" fill="#aaa"/><circle cx="982.7" cy="378.9" r="0.4" fill="#aaa"/><circle cx="938.2" cy="383.7" r="0.4" fill="#aaa"/><circle cx="987.9" cy="392.4" r="0.4" fill="#aaa"/><circle cx="967.6" cy="387.0" r="0.4" fill="#aaa"/><circle cx="960.4" cy="390.4" r="0.4" fill="#aaa"/><circle cx="951.1" cy="398.4" r="0.4" fill="#aaa"/><circle cx="965.1" cy="411.2" r="0.4" fill="#aaa"/><circle cx="970.9" cy="412.2" r="0.4" fill="#aaa"/><circle cx="981.4" cy="414.6" r="0.4" fill="#aaa"/><circle cx="970.3" cy="381.5" r="0.4" fill="#aaa"/><circle cx="981.6" cy="413.6" r="0.4" fill="#aaa"/><circle cx="984.3" cy="397.8" r="0.4" fill="#aaa"/><circle cx="972.8" cy="383.4" r="0.4" fill="#aaa"/><circle cx="979.9" cy="397.9" r="0.4" fill="#aaa"/><circle cx="947.1" cy="377.5" r="0.4" fill="#aaa"/><circle cx="981.2" cy="414.6" r="0.4" fill="#aaa"/><circle cx="935.3" cy="407.0" r="0.4" fill="#aaa"/><circle cx="954.6" cy="381.0" r="0.4" fill="#aaa"/><circle cx="947.6" cy="405.8" r="0.4" fill="#aaa"/><circle cx="982.4" cy="376.8" r="0.4" fill="#aaa"/><circle cx="966.9" cy="376.8" r="0.4" fill="#aaa"/><circle cx="973.1" cy="388.2" r="0.4" fill="#aaa"/></svg>
<div class="ttl" style="left:749.4px;top:356.3px;width:41.0px;height:16.3px;"></div>
<div class="t" style="left:569.9px;width:400px;text-align:center;top:359.03px;font-size:9.20px;line-height:11.04px;color:#222;font-family:'Liberation Serif', serif;transform:scaleX(0.9132);transform-origin:center center;-webkit-text-stroke:0.2px #222;">vectorize</div>
<div class="ed" style="left:748.8px;top:372.6px;width:43.4px;height:13.2px;"></div>
<div class="t" style="left:570.5px;width:400px;text-align:center;top:374.22px;font-size:9.47px;line-height:11.37px;color:#222;font-family:'Liberation Serif', serif;transform:scaleX(0.9132);transform-origin:center center;-webkit-text-stroke:0.2px #222;">edit delete</div>
<div class="bd" style="left:714.7px;top:385.8px;width:110.4px;height:154.2px;"></div>
<div class="wh" style="left:715.7px;top:386.8px;width:108.4px;height:106.2px;border-radius:3px 3px 0 0"></div>
<svg width="113" height="50" viewBox="0 0 113 50" style="left:712px;top:415px">
<g fill="none" stroke="#c6c6c6" stroke-width="0.5">
<path d="M8 15.3 H25.4 V37.3 H8 L7 35 L8.5 32 L7 29 V24 L8.5 21 L7 18 Z"/>
<path d="M25.4 15.3 L28 14.5 L31 13.8 L34 14 L37 13 L40 13.5 L43 12.5 L47.5 10.7 H105.6 L106.8 12.4 V39.5 L105.6 41 H91.5 L90.4 35 H72.3 L69 40.7 H55 L53 37 V32"/>
<path d="M27 37.3 L28 41.8 H40.7 L41.8 37.3 H46.3 L49 33 L53 31.6"/>
<path d="M27 20 L31 22 M34 25 H41 V32 H37 M47.5 17 V25 M67 19 V33 M92 14 L101 15 M92 35 H102 V28"/>
</g>
<g fill="none" stroke="#f6d2d2" stroke-width="0.5">
<path d="M29.4 30.5 L81.4 17.5 L102.8 22.6 M47.5 17 L54 19.8 M81.4 17.5 L90.4 30.5 L102.8 22.6 M33 25 L41 25"/>
</g>
<g fill="#6a6a6a">
<circle cx="27" cy="21.5" r="0.6"/><circle cx="27" cy="31" r="0.6"/><circle cx="27" cy="36.7" r="0.6"/>
<circle cx="54.2" cy="19.2" r="0.6"/><circle cx="54.2" cy="26" r="0.6"/><circle cx="67.2" cy="20.3" r="0.6"/><circle cx="67.2" cy="32.2" r="0.6"/>
<circle cx="40.7" cy="24.9" r="0.55"/><circle cx="33.9" cy="24.9" r="0.5"/><circle cx="90.4" cy="30.5" r="0.6"/><circle cx="98" cy="34.5" r="0.6"/>
<circle cx="102.8" cy="22.6" r="0.6"/><circle cx="81.4" cy="17.5" r="0.6"/><circle cx="9.6" cy="26" r="0.5"/><circle cx="8" cy="15.3" r="0.5"/><circle cx="8" cy="37.3" r="0.5"/>
</g>
</svg>
<div class="io" style="left:662.6px;top:385.8px;width:53.2px;height:23.2px;"></div>
<div class="t" style="left:664.4px;top:387.32px;font-size:9.53px;line-height:11.43px;font-weight:bold;color:#222;font-family:'Liberation Serif', serif;transform:scaleX(0.9132);transform-origin:left center;-webkit-text-stroke:0.2px #222;">inputs</div>
<div class="t" style="left:664.4px;top:395.52px;font-size:9.20px;line-height:11.04px;color:#222;font-family:'Liberation Serif', serif;transform:scaleX(0.9132);transform-origin:left center;-webkit-text-stroke:0.2px #222;">image (RGBA)</div>
<div class="io" style="left:824.4px;top:385.8px;width:45.2px;height:23.2px;"></div>
<div class="t" style="right:132.0px;top:387.32px;font-size:9.53px;line-height:11.43px;font-weight:bold;color:#222;font-family:'Liberation Serif', serif;transform:scaleX(0.9132);transform-origin:right center;-webkit-text-stroke:0.2px #222;">outputs</div>
<div class="t" style="right:132.0px;top:395.52px;font-size:9.20px;line-height:11.04px;color:#222;font-family:'Liberation Serif', serif;transform:scaleX(0.9132);transform-origin:right center;-webkit-text-stroke:0.2px #222;">path (array)</div>
<div class="t" style="left:724.4px;top:494.28px;font-size:9.20px;line-height:11.04px;color:#222;font-family:'Liberation Serif', serif;transform:scaleX(0.9132);transform-origin:left center;-webkit-text-stroke:0.2px #222;">vector fit (pixels):</div>
<div class="inp" style="left:786.3px;top:494.0px;width:29.1px;height:11.6px;"></div>
<div class="t" style="left:788.5px;top:496.64px;font-size:6.60px;line-height:7.92px;color:#2a2a2a;font-family:'Liberation Sans', sans-serif;transform:scaleX(0.9091);transform-origin:left center;-webkit-text-stroke:0.05px #2a2a2a;">1</div>
<div class="t" style="left:740.0px;top:507.48px;font-size:9.20px;line-height:11.04px;color:#222;font-family:'Liberation Serif', serif;transform:scaleX(0.9132);transform-origin:left center;-webkit-text-stroke:0.2px #222;">sort distance:</div>
<div style="left:790.0px;top:508.0px;width:7.6px;height:7.4px;background:#86ad70;border:0.8px solid #6a8f56;border-radius:1px"></div>
<svg width="7.6" height="7.4" style="left:790.0px;top:508.0px" viewBox="0 0 10 10"><path d="M2.6 2.6 L7.4 7.4 M7.4 2.6 L2.6 7.4" stroke="#eef4e8" stroke-width="1.5"/></svg>
<div class="btn" style="left:752.2px;top:518.4px;width:34.8px;height:17.4px;"></div>
<div class="t" style="left:569.6px;width:400px;text-align:center;top:523.34px;font-size:6.60px;line-height:7.92px;color:#333;font-family:'Liberation Sans', sans-serif;transform:scaleX(0.9091);transform-origin:center center;-webkit-text-stroke:0.05px #333;">view</div>
<div class="ttl" style="left:28.6px;top:328.0px;width:118.0px;height:16.8px;"></div>
<div class="t" style="left:-112.4px;width:400px;text-align:center;top:330.98px;font-size:9.20px;line-height:11.04px;color:#222;font-family:'Liberation Serif', serif;transform:scaleX(0.9132);transform-origin:center center;-webkit-text-stroke:0.2px #222;">Roland SRM-20 milling machine</div>
<div class="ed" style="left:66.8px;top:344.8px;width:42.7px;height:12.5px;"></div>
<div class="t" style="left:-111.8px;width:400px;text-align:center;top:346.07px;font-size:9.47px;line-height:11.37px;color:#222;font-family:'Liberation Serif', serif;transform:scaleX(0.9132);transform-origin:center center;-webkit-text-stroke:0.2px #222;">edit delete</div>
<div class="bd" style="left:46.8px;top:357.3px;width:84.8px;height:168.7px;"></div>
<div class="io" style="left:13.8px;top:358.0px;width:33.0px;height:23.0px;"></div>
<div class="t" style="left:15.6px;top:359.52px;font-size:9.53px;line-height:11.43px;font-weight:bold;color:#222;font-family:'Liberation Serif', serif;transform:scaleX(0.9132);transform-origin:left center;-webkit-text-stroke:0.2px #222;">inputs</div>
<div class="t" style="left:15.6px;top:367.72px;font-size:9.20px;line-height:11.04px;color:#222;font-family:'Liberation Serif', serif;transform:scaleX(0.9132);transform-origin:left center;-webkit-text-stroke:0.2px #222;">toolpath</div>
<div class="io" style="left:127.4px;top:358.0px;width:33.0px;height:23.0px;"></div>
<div class="t" style="right:841.2px;top:359.52px;font-size:9.53px;line-height:11.43px;font-weight:bold;color:#222;font-family:'Liberation Serif', serif;transform:scaleX(0.9132);transform-origin:right center;-webkit-text-stroke:0.2px #222;">outputs</div>
<div class="t" style="right:841.2px;top:367.72px;font-size:9.20px;line-height:11.04px;color:#222;font-family:'Liberation Serif', serif;transform:scaleX(0.9132);transform-origin:right center;-webkit-text-stroke:0.2px #222;">file</div>
<div class="t" style="left:50.0px;top:362.58px;font-size:9.20px;line-height:11.04px;color:#222;font-family:'Liberation Serif', serif;transform:scaleX(0.9132);transform-origin:left center;-webkit-text-stroke:0.2px #222;">speed:</div>
<div class="inp" style="left:74.0px;top:361.8px;width:28.8px;height:11.2px;"></div>
<div class="t" style="left:76.2px;top:364.24px;font-size:6.60px;line-height:7.92px;color:#2a2a2a;font-family:'Liberation Sans', sans-serif;transform:scaleX(0.9091);transform-origin:left center;-webkit-text-stroke:0.05px #2a2a2a;">4</div>
<div class="t" style="left:105.4px;top:362.58px;font-size:9.20px;line-height:11.04px;color:#222;font-family:'Liberation Serif', serif;transform:scaleX(0.9132);transform-origin:left center;-webkit-text-stroke:0.2px #222;">(mm/s</div>
<div class="t" style="left:-110.3px;width:400px;text-align:center;top:373.18px;font-size:9.20px;line-height:11.04px;color:#222;font-family:'Liberation Serif', serif;transform:scaleX(0.9132);transform-origin:center center;-webkit-text-stroke:0.2px #222;">origin:</div>
<div class="t" style="left:61.2px;top:383.38px;font-size:9.20px;line-height:11.04px;color:#222;font-family:'Liberation Serif', serif;transform:scaleX(0.9132);transform-origin:left center;-webkit-text-stroke:0.2px #222;">x:</div>
<div class="inp" style="left:68.6px;top:382.9px;width:28.4px;height:11.0px;"></div>
<div class="t" style="left:70.8px;top:385.24px;font-size:6.60px;line-height:7.92px;color:#2a2a2a;font-family:'Liberation Sans', sans-serif;transform:scaleX(0.9091);transform-origin:left center;-webkit-text-stroke:0.05px #2a2a2a;">0</div>
<div class="t" style="left:99.6px;top:383.38px;font-size:9.20px;line-height:11.04px;color:#222;font-family:'Liberation Serif', serif;transform:scaleX(0.9132);transform-origin:left center;-webkit-text-stroke:0.2px #222;">(mm)</div>
<div class="t" style="left:61.2px;top:395.28px;font-size:9.20px;line-height:11.04px;color:#222;font-family:'Liberation Serif', serif;transform:scaleX(0.9132);transform-origin:left center;-webkit-text-stroke:0.2px #222;">y:</div>
<div class="inp" style="left:68.6px;top:394.8px;width:28.4px;height:11.0px;"></div>
<div class="t" style="left:70.8px;top:397.14px;font-size:6.60px;line-height:7.92px;color:#2a2a2a;font-family:'Liberation Sans', sans-serif;transform:scaleX(0.9091);transform-origin:left center;-webkit-text-stroke:0.05px #2a2a2a;">0</div>
<div class="t" style="left:99.6px;top:395.28px;font-size:9.20px;line-height:11.04px;color:#222;font-family:'Liberation Serif', serif;transform:scaleX(0.9132);transform-origin:left center;-webkit-text-stroke:0.2px #222;">(mm)</div>
<div class="t" style="left:61.2px;top:407.38px;font-size:9.20px;line-height:11.04px;color:#222;font-family:'Liberation Serif', serif;transform:scaleX(0.9132);transform-origin:left center;-webkit-text-stroke:0.2px #222;">z:</div>
<div class="inp" style="left:68.6px;top:406.9px;width:28.4px;height:11.0px;"></div>
<div class="t" style="left:70.8px;top:409.24px;font-size:6.60px;line-height:7.92px;color:#2a2a2a;font-family:'Liberation Sans', sans-serif;transform:scaleX(0.9091);transform-origin:left center;-webkit-text-stroke:0.05px #2a2a2a;">0</div>
<div class="t" style="left:99.6px;top:407.38px;font-size:9.20px;line-height:11.04px;color:#222;font-family:'Liberation Serif', serif;transform:scaleX(0.9132);transform-origin:left center;-webkit-text-stroke:0.2px #222;">(mm)</div>
<div class="btn" style="left:58.6px;top:419.8px;width:60.8px;height:17.6px;"></div>
<div class="t" style="left:-111.0px;width:400px;text-align:center;top:424.84px;font-size:6.60px;line-height:7.92px;color:#333;font-family:'Liberation Sans', sans-serif;transform:scaleX(0.9091);transform-origin:center center;-webkit-text-stroke:0.05px #333;">move to origin</div>
<div class="t" style="left:-110.5px;width:400px;text-align:center;top:437.18px;font-size:9.20px;line-height:11.04px;color:#222;font-family:'Liberation Serif', serif;transform:scaleX(0.9132);transform-origin:center center;-webkit-text-stroke:0.2px #222;">jog height:</div>
<div class="t" style="left:61.2px;top:447.38px;font-size:9.20px;line-height:11.04px;color:#222;font-family:'Liberation Serif', serif;transform:scaleX(0.9132);transform-origin:left center;-webkit-text-stroke:0.2px #222;">z:</div>
<div class="inp" style="left:68.6px;top:446.6px;width:28.4px;height:11.2px;"></div>
<div class="t" style="left:70.8px;top:449.04px;font-size:6.60px;line-height:7.92px;color:#2a2a2a;font-family:'Liberation Sans', sans-serif;transform:scaleX(0.9091);transform-origin:left center;-webkit-text-stroke:0.05px #2a2a2a;">2</div>
<div class="t" style="left:99.6px;top:447.38px;font-size:9.20px;line-height:11.04px;color:#222;font-family:'Liberation Serif', serif;transform:scaleX(0.9132);transform-origin:left center;-webkit-text-stroke:0.2px #222;">(mm)</div>
<div class="t" style="left:-110.5px;width:400px;text-align:center;top:456.98px;font-size:9.20px;line-height:11.04px;color:#222;font-family:'Liberation Serif', serif;transform:scaleX(0.9132);transform-origin:center center;-webkit-text-stroke:0.2px #222;">home:</div>
<div class="t" style="left:61.2px;top:467.68px;font-size:9.20px;line-height:11.04px;color:#222;font-family:'Liberation Serif', serif;transform:scaleX(0.9132);transform-origin:left center;-webkit-text-stroke:0.2px #222;">x:</div>
<div class="inp" style="left:68.6px;top:467.2px;width:28.4px;height:11.0px;"></div>
<div class="t" style="left:70.8px;top:469.54px;font-size:6.60px;line-height:7.92px;color:#2a2a2a;font-family:'Liberation Sans', sans-serif;transform:scaleX(0.9091);transform-origin:left center;-webkit-text-stroke:0.05px #2a2a2a;">0</div>
<div class="t" style="left:99.6px;top:467.68px;font-size:9.20px;line-height:11.04px;color:#222;font-family:'Liberation Serif', serif;transform:scaleX(0.9132);transform-origin:left center;-webkit-text-stroke:0.2px #222;">(mm)</div>
<div class="t" style="left:61.2px;top:479.58px;font-size:9.20px;line-height:11.04px;color:#222;font-family:'Liberation Serif', serif;transform:scaleX(0.9132);transform-origin:left center;-webkit-text-stroke:0.2px #222;">y:</div>
<div class="inp" style="left:68.6px;top:479.1px;width:28.4px;height:11.0px;"></div>
<div class="t" style="left:70.8px;top:481.44px;font-size:6.60px;line-height:7.92px;color:#2a2a2a;font-family:'Liberation Sans', sans-serif;transform:scaleX(0.9091);transform-origin:left center;-webkit-text-stroke:0.05px #2a2a2a;">152.4</div>
<div class="t" style="left:99.6px;top:479.58px;font-size:9.20px;line-height:11.04px;color:#222;font-family:'Liberation Serif', serif;transform:scaleX(0.9132);transform-origin:left center;-webkit-text-stroke:0.2px #222;">(mm)</div>
<div class="t" style="left:61.2px;top:492.18px;font-size:9.20px;line-height:11.04px;color:#222;font-family:'Liberation Serif', serif;transform:scaleX(0.9132);transform-origin:left center;-webkit-text-stroke:0.2px #222;">z:</div>
<div class="inp" style="left:68.6px;top:491.7px;width:28.4px;height:11.0px;"></div>
<div class="t" style="left:70.8px;top:494.04px;font-size:6.60px;line-height:7.92px;color:#2a2a2a;font-family:'Liberation Sans', sans-serif;transform:scaleX(0.9091);transform-origin:left center;-webkit-text-stroke:0.05px #2a2a2a;">60.5</div>
<div class="t" style="left:99.6px;top:492.18px;font-size:9.20px;line-height:11.04px;color:#222;font-family:'Liberation Serif', serif;transform:scaleX(0.9132);transform-origin:left center;-webkit-text-stroke:0.2px #222;">(mm)</div>
<div class="btn" style="left:59.6px;top:505.2px;width:59.2px;height:17.0px;"></div>
<div class="t" style="left:-110.8px;width:400px;text-align:center;top:509.94px;font-size:6.60px;line-height:7.92px;color:#333;font-family:'Liberation Sans', sans-serif;transform:scaleX(0.9091);transform-origin:center center;-webkit-text-stroke:0.05px #333;">move to home</div>
<div class="ttl" style="left:247.5px;top:346.3px;width:38.2px;height:16.9px;"></div>
<div class="t" style="left:66.6px;width:400px;text-align:center;top:349.33px;font-size:9.20px;line-height:11.04px;color:#222;font-family:'Liberation Serif', serif;transform:scaleX(0.9132);transform-origin:center center;-webkit-text-stroke:0.2px #222;">save file</div>
<div class="ed" style="left:244.8px;top:363.2px;width:43.5px;height:14.3px;"></div>
<div class="t" style="left:66.6px;width:400px;text-align:center;top:365.37px;font-size:9.47px;line-height:11.37px;color:#222;font-family:'Liberation Serif', serif;transform:scaleX(0.9132);transform-origin:center center;-webkit-text-stroke:0.2px #222;">edit delete</div>
<div class="io" style="left:210.3px;top:377.5px;width:43.2px;height:22.8px;"></div>
<div class="t" style="left:212.1px;top:379.02px;font-size:9.53px;line-height:11.43px;font-weight:bold;color:#222;font-family:'Liberation Serif', serif;transform:scaleX(0.9132);transform-origin:left center;-webkit-text-stroke:0.2px #222;">inputs</div>
<div class="t" style="left:212.1px;top:387.22px;font-size:9.20px;line-height:11.04px;color:#222;font-family:'Liberation Serif', serif;transform:scaleX(0.9132);transform-origin:left center;-webkit-text-stroke:0.2px #222;">file (object)</div>
<div class="bd" style="left:253.5px;top:377.5px;width:27.0px;height:22.8px;"></div>
<div class="t" style="left:67.0px;width:400px;text-align:center;top:379.98px;font-size:9.20px;line-height:11.04px;color:#222;font-family:'Liberation Serif', serif;transform:scaleX(0.9132);transform-origin:center center;-webkit-text-stroke:0.2px #222;">name:</div>
<div class="t" style="left:67.0px;width:400px;text-align:center;top:388.28px;font-size:9.20px;line-height:11.04px;color:#222;font-family:'Liberation Serif', serif;transform:scaleX(0.9132);transform-origin:center center;-webkit-text-stroke:0.2px #222;">size:</div>
<div class="ttl" style="left:452.4px;top:453.4px;width:55.2px;height:16.8px;"></div>
<div class="t" style="left:280.0px;width:400px;text-align:center;top:456.38px;font-size:9.20px;line-height:11.04px;color:#222;font-family:'Liberation Serif', serif;transform:scaleX(0.9132);transform-origin:center center;-webkit-text-stroke:0.2px #222;">view toolpath</div>
<div class="ed" style="left:458.9px;top:470.2px;width:42.7px;height:13.2px;"></div>
<div class="t" style="left:280.2px;width:400px;text-align:center;top:471.82px;font-size:9.47px;line-height:11.37px;color:#222;font-family:'Liberation Serif', serif;transform:scaleX(0.9132);transform-origin:center center;-webkit-text-stroke:0.2px #222;">edit delete</div>
<div class="bd" style="left:426.5px;top:483.4px;width:106.8px;height:50.9px;"></div>
<div class="io" style="left:367.2px;top:483.4px;width:60.5px;height:22.8px;"></div>
<div class="t" style="left:369.0px;top:484.92px;font-size:9.53px;line-height:11.43px;font-weight:bold;color:#222;font-family:'Liberation Serif', serif;transform:scaleX(0.9132);transform-origin:left center;-webkit-text-stroke:0.2px #222;">inputs</div>
<div class="t" style="left:369.0px;top:493.12px;font-size:9.20px;line-height:11.04px;color:#222;font-family:'Liberation Serif', serif;transform:scaleX(0.9132);transform-origin:left center;-webkit-text-stroke:0.2px #222;">toolpath (object)</div>
<div class="io" style="left:532.8px;top:483.4px;width:60.0px;height:22.8px;"></div>
<div class="t" style="right:408.8px;top:484.92px;font-size:9.53px;line-height:11.43px;font-weight:bold;color:#222;font-family:'Liberation Serif', serif;transform:scaleX(0.9132);transform-origin:right center;-webkit-text-stroke:0.2px #222;">outputs</div>
<div class="t" style="right:408.8px;top:493.12px;font-size:9.20px;line-height:11.04px;color:#222;font-family:'Liberation Serif', serif;transform:scaleX(0.9132);transform-origin:right center;-webkit-text-stroke:0.2px #222;">toolpath (object)</div>
<div class="t" style="left:280.0px;width:400px;text-align:center;top:485.98px;font-size:9.20px;line-height:11.04px;color:#222;font-family:'Liberation Serif', serif;transform:scaleX(0.9132);transform-origin:center center;-webkit-text-stroke:0.2px #222;">name: fts_mini_traces.png</div>
<div class="t" style="left:280.0px;width:400px;text-align:center;top:494.18px;font-size:9.20px;line-height:11.04px;color:#222;font-family:'Liberation Serif', serif;transform:scaleX(0.9132);transform-origin:center center;-webkit-text-stroke:0.2px #222;">48.133 x 16.891 x 0.102 (mm)</div>
<div class="t" style="left:280.0px;width:400px;text-align:center;top:502.38px;font-size:9.20px;line-height:11.04px;color:#222;font-family:'Liberation Serif', serif;transform:scaleX(0.9132);transform-origin:center center;-webkit-text-stroke:0.2px #222;">1.895 x 0.665 x 0.004 (in)</div>
<div class="btn" style="left:462.0px;top:512.7px;width:35.5px;height:17.5px;"></div>
<div class="t" style="left:279.8px;width:400px;text-align:center;top:517.69px;font-size:6.60px;line-height:7.92px;color:#333;font-family:'Liberation Sans', sans-serif;transform:scaleX(0.9091);transform-origin:center center;-webkit-text-stroke:0.05px #333;">view</div>
<div style="left:992.6px;top:52.5px;width:7.4px;height:488px;background:#ececec;border-left:1px solid #d6d6d6"></div>
<div style="left:994.2px;top:56px;width:4.6px;height:483px;background:#dcdcdc;border:1px solid #b8b8b8;border-radius:3px"></div>
<div style="left:0;top:539.6px;width:993px;height:8px;background:linear-gradient(#dadada,#f2f2f2);border-top:1px solid #c8c8c8"></div>
<div style="left:1px;top:541.2px;width:682px;height:4.6px;background:#dedede;border:1px solid #b9b9b9;border-radius:3px"></div>
<div style="left:993px;top:540px;width:7px;height:7.6px;background:#e6e6e6"></div>
<div style="left:0;top:547.6px;width:1000px;height:14.4px;background:#2f2f2f;border-top:1px solid #1c1c1c"></div>
<svg width="1000" height="20" style="left:0;top:545px">
    <path d="M2.5 4.8 H5 V7 H4.5 V12 Q4.5 13 5.5 13 H11 V6 Q11 4.8 12.5 4.8 V13.5 Q12.5 14.6 11.4 14.6 H4 Q2.5 14.6 2.5 13 Z" fill="#a6d986"/><path d="M6 4.8 H11.2 Q10 5 9.8 6.2 V11.8 H6 Z" fill="#cfeab8"/><path d="M6.8 11 V7.5 H9 V11 M7.9 7.5 V11" stroke="#6fae48" stroke-width="0.6" fill="none"/>
    <rect x="40.5" y="5" width="10.5" height="9" fill="#80b858"/>
    <rect x="42" y="7.5" width="7.5" height="5" fill="#a9d481"/>
    <circle cx="67" cy="9.8" r="5" fill="#e35f16"/><circle cx="67.8" cy="9.2" r="3.3" fill="#2d5db5"/><circle cx="68.4" cy="7.8" r="1.6" fill="#62b5e8"/><path d="M62.4 10 Q63 14.6 67.5 14.7 Q71.6 14.5 72 10.5 Q70 13 67 12.6 Q64 12 62.4 10 Z" fill="#f3b51f"/><path d="M70.5 5.5 Q72.3 7.5 72 10" stroke="#f2c33a" stroke-width="0.9" fill="none"/>
    <rect x="75.7" y="5.3" width="9.2" height="9" rx="1" fill="#0c0c0c" stroke="#c2c2c2" stroke-width="1.2"/>
    <path d="M78 8.5 L80 10 L78 11.5" stroke="#ddd" stroke-width="0.8" fill="none"/>
    <rect x="89" y="6" width="10" height="8.5" rx="1" fill="#8fc45f"/>
    <rect x="89" y="5" width="4.5" height="2" fill="#8fc45f"/>
    <circle cx="114.5" cy="9.8" r="5" fill="#e35f16"/><circle cx="115.3" cy="9.2" r="3.3" fill="#2d5db5"/><circle cx="115.9" cy="7.8" r="1.6" fill="#62b5e8"/><path d="M109.9 10 Q110.5 14.6 115.0 14.7 Q119.1 14.5 119.5 10.5 Q117.5 13 114.5 12.6 Q111.5 12 109.9 10 Z" fill="#f3b51f"/><path d="M118.0 5.5 Q119.8 7.5 119.5 10" stroke="#f2c33a" stroke-width="0.9" fill="none"/>
    <rect x="109" y="15.5" width="86" height="1.5" fill="#8fae79"/>
    <path d="M904 6 L908 4.8 L912 6 V10 Q912 13 908 14.5 Q904 13 904 10 Z" fill="#f2f2f2"/>
    <circle cx="908" cy="9.5" r="2.3" fill="#3b78d0"/>
    <ellipse cx="921.3" cy="9.5" rx="3.8" ry="5" fill="#3d7bd6"/>
    <path d="M920 6.8 L922.8 9 L920.5 11.3 M920.8 6.5 V12.5 L922.8 10.5" stroke="#fff" stroke-width="0.7" fill="none"/>
    <circle cx="933.5" cy="7.5" r="2.3" fill="#cfcfcf"/>
    <path d="M929.5 14 Q929.5 10.5 933.5 10.5 Q937.5 10.5 937.5 14 Z" fill="#cfcfcf"/>
    <path d="M942.5 7.5 Q946.2 4.5 950 7.5 L946.2 12.5 Z" fill="#6e6e6e"/>
    <rect x="956.5" y="5.8" width="5.2" height="8.3" rx="0.8" fill="none" stroke="#c8c8c8" stroke-width="1"/>
    <rect x="958" y="4.8" width="2.2" height="1.2" fill="#c8c8c8"/>
    <path d="M990 8 H992 L995 5.5 V13.5 L992 11 H990 Z" fill="#777"/>
    </svg>
<div class="t" style="left:-174.8px;width:400px;text-align:center;top:550.70px;font-size:7.50px;line-height:9.00px;font-weight:bold;color:#cfcfcf;font-family:'Liberation Sans', sans-serif;">Menu</div>
<div class="t" style="left:122.0px;top:550.48px;font-size:7.20px;line-height:8.64px;font-weight:bold;color:#f2f2f2;font-family:'Liberation Sans', sans-serif;">mods - Mozilla F...</div>
<div class="t" style="left:776.5px;width:400px;text-align:center;top:550.80px;font-size:7.00px;line-height:8.40px;font-weight:bold;color:#e8e8e8;font-family:'Liberation Sans', sans-serif;">12.39</div>
</body></html>
